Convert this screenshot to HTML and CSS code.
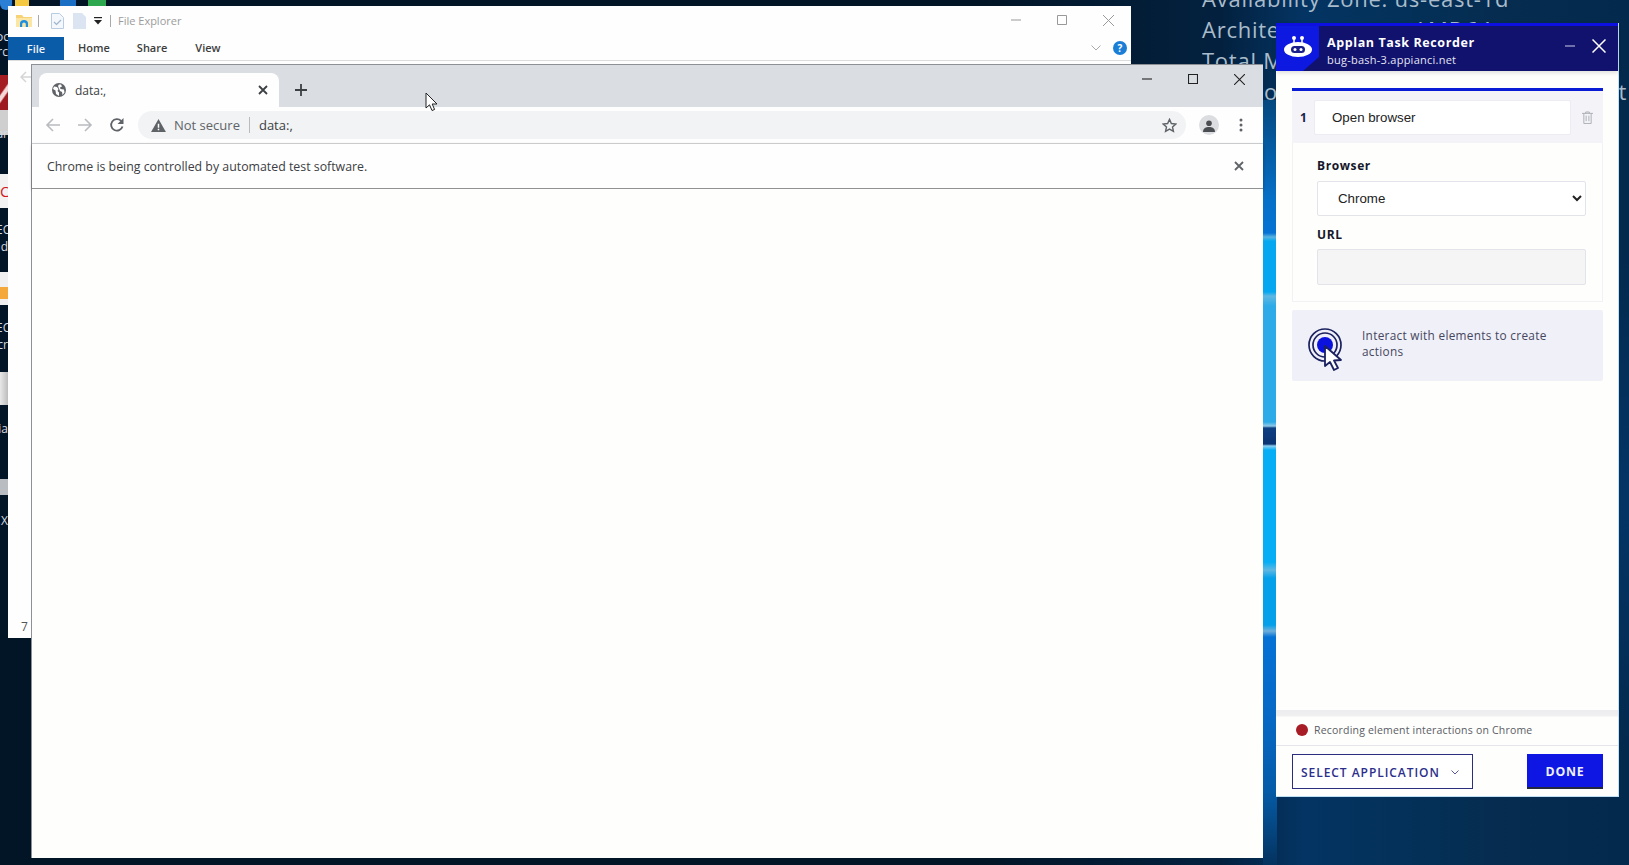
FILE: index.html
```html
<!DOCTYPE html>
<html lang="en">
<head>
<meta charset="utf-8">
<title>Applan Task Recorder</title>
<link rel="stylesheet" href="styles.css">
</head>
<body>
<main class="desktop">
  <div class="wall-streak"></div>

  <div class="bginfo">
    <div class="bg-line bg-line-1">Availability Zone: us-east-1d</div>
    <div class="bg-line bg-line-2"><span>Architecture:</span><span class="bg-value">AMD64</span></div>
    <div class="bg-line bg-line-3">Total Memory:</div>
    <div class="bg-line bg-line-4"><span>o</span><span>t</span></div>
  </div>

  <div class="edge-icons">
    <i class="piece p-chrome"></i><i class="piece p-yellow"></i><i class="piece p-blue"></i><i class="piece p-green"></i>
    <span class="edge-text t1">oc</span><span class="edge-text t2">rc</span>
    <i class="piece p-red"></i><i class="piece p-gray"></i><span class="edge-text t3">ar</span>
    <i class="piece p-white1"></i><span class="edge-c">C</span><span class="edge-text t4">EC</span><span class="edge-text t5">d</span>
    <i class="piece p-white2"></i><i class="piece p-folder"></i><span class="edge-text t6">EC</span><span class="edge-text t7">cr</span>
    <i class="piece p-white3"></i><span class="edge-text t8">ia</span>
    <i class="piece p-gear"></i><span class="edge-text t9">X</span>
  </div>

  <section class="explorer">
    <header class="fe-title">
      <svg class="fe-folder" viewBox="0 0 16 16" width="16" height="16"><path d="M0 2h6l1.500 2H16v10H0z" fill="#f6d377"/><path d="M0 5h16v9H0z" fill="#fbe6a6"/><path d="M4 14V10.500a4 3.500 0 0 1 8 0V14H9.800v-3a1.800 1.500 0 0 0-3.600 0v3z" fill="#1f8fe0"/></svg>
      <span class="fe-sep"></span>
      <svg class="fe-doc" viewBox="0 0 13 16" width="13" height="16"><path d="M.5.500h8l4 4v11H.5z" fill="#f4f7fb" stroke="#b8cde2"/><path d="M3 9l2.500 2.500L10 7" fill="none" stroke="#9db6cd" stroke-width="1.200"/></svg>
      <svg class="fe-doc2" viewBox="0 0 13 16" width="13" height="16"><path d="M0 0h9l4 4v12H0z" fill="#dbe5f2"/></svg>
      <svg class="fe-drop" viewBox="0 0 8 8" width="8" height="8"><path d="M0 0h8v1.200H0z" fill="#222"/><path d="M0 3h8L4 7.500z" fill="#222"/></svg>
      <span class="fe-sep"></span>
      <span class="fe-name">File Explorer</span>
      <div class="win-controls fe-controls">
        <span class="win-btn"><svg viewBox="0 0 10 10" width="10" height="10"><path d="M0 5h10" stroke="#999" fill="none"/></svg></span>
        <span class="win-btn"><svg viewBox="0 0 10 10" width="10" height="10"><path d="M.5.500h9v9h-9z" stroke="#999" fill="none"/></svg></span>
        <span class="win-btn"><svg viewBox="0 0 10 10" width="11" height="11"><path d="M0 0l10 10M10 0L0 10" stroke="#999" fill="none" stroke-width=".9"/></svg></span>
      </div>
    </header>
    <nav class="fe-ribbon">
      <span class="fe-file">File</span>
      <span class="fe-tab fe-home">Home</span>
      <span class="fe-tab fe-share">Share</span>
      <span class="fe-tab fe-view">View</span>
      <svg class="fe-chev" viewBox="0 0 10 6" width="10" height="6"><path d="M.5.500L5 5 9.500.500" stroke="#aaa" fill="none"/></svg>
      <span class="fe-help">?</span>
    </nav>
    <div class="fe-body">
      <svg class="fe-back" viewBox="0 0 14 12" width="14" height="12"><path d="M6 1L1 6l5 5M1 6h13" fill="none" stroke="#d5d5d5" stroke-width="1.500"/></svg>
      <span class="fe-count">7</span>
    </div>
  </section>

  <section class="chrome">
    <div class="tabstrip">
      <div class="tab">
        <svg class="globe" viewBox="0 0 14 14" width="14" height="14"><circle cx="7" cy="7" r="7" fill="#5f6368"/><path d="M2 3.500l3 .5 1.500 2-1 2 1.500 1.500V13L4 11 3.500 7.500 1 6zM9 1.500l1 2-2 1 .5 1.500 3.500.5.500 3-2 2.500-.5-3-2-1L7 5.500 6 3l1-1.500z" fill="#fff"/></svg>
        <span class="tab-title">data:,</span>
        <svg class="tab-x" viewBox="0 0 10 10" width="10" height="10"><path d="M1 1l8 8M9 1L1 9" stroke="#3c4043" stroke-width="1.800" fill="none"/></svg>
      </div>
      <svg class="tab-new" viewBox="0 0 12 12" width="12" height="12"><path d="M6 0v12M0 6h12" stroke="#3c4043" stroke-width="1.800" fill="none"/></svg>
      <div class="win-controls chrome-controls">
        <span class="win-btn"><svg viewBox="0 0 10 10" width="10" height="10"><path d="M0 5h10" stroke="#222" fill="none" stroke-width="1.100"/></svg></span>
        <span class="win-btn"><svg viewBox="0 0 10 10" width="10" height="10"><path d="M.5.500h9v9h-9z" stroke="#222" fill="none" stroke-width="1.100"/></svg></span>
        <span class="win-btn"><svg viewBox="0 0 10 10" width="11" height="11"><path d="M0 0l10 10M10 0L0 10" stroke="#222" fill="none" stroke-width="1"/></svg></span>
      </div>
    </div>
    <div class="toolbar">
      <svg class="nav-icon" viewBox="0 0 16 16" width="16" height="16"><path d="M8 2L2 8l6 6M2 8h13" stroke="#b8bbbf" stroke-width="1.600" fill="none"/></svg>
      <svg class="nav-icon" viewBox="0 0 16 16" width="16" height="16"><path d="M8 2l6 6-6 6M14 8H1" stroke="#b8bbbf" stroke-width="1.600" fill="none"/></svg>
      <svg class="nav-icon" viewBox="0 0 16 16" width="16" height="16"><path d="M13.500 9.500a5.800 5.800 0 1 1-1.400-5.700" stroke="#5f6368" stroke-width="1.800" fill="none"/><path d="M14.500 1v6h-6z" fill="#5f6368"/></svg>
      <div class="omnibox">
        <svg class="warn" viewBox="0 0 16 14" width="15" height="13"><path d="M8 0l8 14H0z" fill="#5f6368"/><path d="M7.200 5h1.600v4.500H7.200zM7.200 10.500h1.600V12H7.200z" fill="#fff"/></svg>
        <span class="not-secure">Not secure</span>
        <span class="omni-sep"></span>
        <span class="omni-url">data:,</span>
        <svg class="star" viewBox="0 0 16 16" width="15" height="15"><path d="M8 1.500l2 4.400 4.800.5-3.600 3.200 1 4.700L8 11.900l-4.200 2.400 1-4.700L1.200 6.400 6 5.900z" fill="none" stroke="#5f6368" stroke-width="1.500"/></svg>
      </div>
      <span class="avatar"><svg viewBox="0 0 12 12" width="12" height="12"><circle cx="6" cy="3.200" r="2.800" fill="#4a4d52"/><path d="M0 12c0-4 3-5 6-5s6 1 6 5z" fill="#4a4d52"/></svg></span>
      <svg class="kebab" viewBox="0 0 4 14" width="4" height="14"><circle cx="2" cy="2" r="1.500" fill="#5f6368"/><circle cx="2" cy="7" r="1.500" fill="#5f6368"/><circle cx="2" cy="12" r="1.500" fill="#5f6368"/></svg>
    </div>
    <div class="infobar">
      <span class="info-text">Chrome is being controlled by automated test software.</span>
      <svg class="info-x" viewBox="0 0 10 10" width="10" height="10"><path d="M1 1l8 8M9 1L1 9" stroke="#5f6368" stroke-width="1.800" fill="none"/></svg>
    </div>
    <div class="page"></div>
  </section>

  <svg class="cursor" viewBox="0 0 14 20" width="14" height="20"><path d="M1 1v15l3.500-3.200L7 18.500l2.600-1-2.400-5.500H12z" fill="#fff" stroke="#222" stroke-width="1"/></svg>

  <aside class="recorder">
    <header class="rec-head">
      <div class="rec-logo">
        <svg viewBox="0 0 28 21" width="28" height="21"><circle cx="10" cy="2" r="2" fill="#fff"/><circle cx="18" cy="2" r="2" fill="#fff"/><path d="M10 2v6M18 2v6" stroke="#fff" stroke-width="1.500"/><ellipse cx="14" cy="13.500" rx="14" ry="7.500" fill="#fff"/><rect x="7" y="10" width="14" height="7" rx="3.500" fill="#1b1f8a"/><circle cx="11" cy="13.500" r="1.500" fill="#fff"/><circle cx="17" cy="13.500" r="1.500" fill="#fff"/></svg>
      </div>
      <div class="rec-titles">
        <div class="rec-title">Applan Task Recorder</div>
        <div class="rec-sub">bug-bash-3.appianci.net</div>
      </div>
      <svg class="rec-min" viewBox="0 0 10 2" width="10" height="2"><path d="M0 1h10" stroke="#8f8fc0" stroke-width="1.500"/></svg>
      <svg class="rec-close" viewBox="0 0 14 14" width="14" height="14"><path d="M.5.500l13 13M13.500.500l-13 13" stroke="#fff" stroke-width="1.500" fill="none"/></svg>
    </header>
    <div class="rec-body">
      <div class="step">
        <div class="step-head">
          <span class="step-num">1</span>
          <input class="step-name" type="text" value="Open browser" aria-label="Step name">
          <svg class="trash" viewBox="0 0 12 14" width="11" height="13"><path d="M0 2.500h12M4 2.500V1h4v1.500M2 2.500V13.500h8V2.500M4.500 5v6M7.500 5v6" fill="none" stroke="#a9abb3" stroke-width="1"/></svg>
        </div>
        <div class="step-form">
          <label class="field-label" for="browser">Browser</label>
          <select class="field-select" id="browser"><option>Chrome</option></select>
          <label class="field-label field-label-url" for="url">URL</label>
          <input class="field-input" id="url" type="text">
        </div>
      </div>
      <div class="hint">
        <svg class="hint-icon" viewBox="0 0 36 46" width="36" height="46">
          <circle cx="17" cy="20" r="16" fill="none" stroke="#1c2260" stroke-width="1.700"/>
          <circle cx="17" cy="20" r="12" fill="none" stroke="#1c2260" stroke-width="1.700"/>
          <circle cx="17" cy="20" r="8" fill="#0b12dd"/>
          <path d="M17 21v20l5-4 4 8 4-2-4-7.500 7-.5z" fill="#fff" stroke="#1c2260" stroke-width="1.800" stroke-linejoin="round"/>
        </svg>
        <p class="hint-text">Interact with elements to create actions</p>
      </div>
    </div>
    <footer class="rec-foot">
      <div class="rec-status"><span class="rec-dot"></span><span>Recording element interactions on Chrome</span></div>
      <div class="rec-actions">
        <button class="btn-select" type="button">SELECT APPLICATION<svg viewBox="0 0 8 5" width="8" height="5"><path d="M.5.500L4 4 7.500.500" stroke="#55579a" fill="none"/></svg></button>
        <button class="btn-done" type="button">DONE</button>
      </div>
    </footer>
  </aside>
</main>
</body>
</html>
```

FILE: styles.css
```css
* { box-sizing: border-box; }
html, body { margin: 0; padding: 0; height: 100%; background: #021526; }
body { overflow: hidden; font-family: "Open Sans", "Noto Sans", sans-serif; }

.desktop {
  position: relative;
  width: 1629px;
  height: 865px;
  overflow: hidden;
  background:
    radial-gradient(ellipse 200px 260px at 1640px 500px, #033566 0%, transparent 100%),
    linear-gradient(90deg, #021526 0%, #021526 60%, #03213f 75%, #043463 80%, #033159 86%, #062c50 92%, #03294c 100%);
}

/* wallpaper light streak between the browser and the recorder */
.wall-streak {
  position: absolute;
  left: 1263px;
  top: 100px;
  width: 14px;
  height: 765px;
  background: linear-gradient(180deg,
    #04487f 0, #0570c8 100px, #0572d4 133px, #5ab4e0 137px, #05a8f0 141px, #05a8f0 192px, #5fb8e2 196px,
    #2cabe8 206px, #2cabe8 322px, #8fc9e8 326px, #0d3f82 328px, #0b3473 344px, #8fd0f0 346px,
    #05aef5 350px, #05aef5 462px, #5fb8e2 470px, #05a0ea 478px, #05a0ea 525px, #6fb0da 531px,
    #0572d6 537px, #0668c4 620px, #055ca8 690px, #04325e 765px);
}

.bginfo {
  position: absolute;
  left: 1202px;
  top: -18px;
  color: #a9bccb;
  font-family: "Open Sans", sans-serif;
  font-size: 22px;
  letter-spacing: .75px;
  line-height: 32px;
  white-space: nowrap;
}
.bg-line { height: 31px; }
.bg-value { display: inline-block; height: 12px; margin-left: 70px; overflow: hidden; vertical-align: top; }
.bg-line-3 { width: 74px; overflow: hidden; }
.bg-line-4 { display: flex; justify-content: space-between; width: 425px; padding-left: 62px; }

/* fragments of desktop icons that peek out on the left edge */
.edge-icons { position: absolute; left: 0; top: 0; width: 8px; height: 640px; }
.piece { position: absolute; display: block; left: 0; width: 8px; }
.p-chrome { top: 0; height: 10px; width: 12px; background: #2b7fd4; border-radius: 0 0 8px 8px; }
.p-yellow { top: 0; left: 15px; width: 14px; height: 6px; background: #f5c842; }
.p-blue { top: 0; left: 60px; width: 16px; height: 6px; background: #1a6fc4; }
.p-green { top: 0; left: 88px; width: 18px; height: 6px; background: #2ea84f; }
.p-red { top: 75px; height: 36px; background: linear-gradient(125deg, #a31d22 0, #a31d22 40%, #f4d8d8 46%, #f4d8d8 56%, #9c1a20 62%); }
.p-gray { top: 110px; height: 25px; background: #cfcfcf; }
.p-white1 { top: 174px; height: 34px; background: #f2f2f2; }
.p-white2 { top: 272px; height: 33px; background: #f0f0f0; }
.p-folder { top: 287px; height: 12px; background: #f4a83a; }
.p-white3 { top: 372px; height: 33px; background: linear-gradient(90deg, #e8e8e8, #bcbcbc); }
.p-gear { top: 479px; height: 16px; background: #b9bcc0; }
.edge-text { position: absolute; left: -4px; width: 12px; overflow: hidden; color: #d5dbe1; font-size: 12px; line-height: 14px; text-align: right; white-space: nowrap; }
.edge-c { position: absolute; left: 0; top: 182px; width: 8px; overflow: hidden; color: #d3181e; font-size: 15px; line-height: 18px; }
.t1 { top: 30px; } .t2 { top: 45px; } .t3 { top: 127px; }
.t4 { top: 223px; } .t5 { top: 240px; } .t6 { top: 321px; } .t7 { top: 338px; }
.t8 { top: 422px; } .t9 { top: 514px; }

/* shared window controls */
.win-controls { display: flex; margin-left: auto; }
.win-btn { display: flex; width: 46px; justify-content: center; align-items: center; }

/* File Explorer */
.explorer {
  position: absolute;
  left: 8px;
  top: 6px;
  width: 1123px;
  height: 632px;
  display: flex;
  flex-direction: column;
  background: #fefefe;
}
.fe-title { display: flex; align-items: center; height: 30px; padding-left: 8px; }
.fe-folder { margin-right: 6px; }
.fe-sep { width: 1px; height: 12px; background: #a9a9a9; }
.fe-doc { margin-left: 12px; }
.fe-doc2 { margin-left: 9px; }
.fe-drop { margin: 0 8px 0 8px; }
.fe-name { margin: 0 0 1px 7px; color: #9c9c9c; font-size: 11px; }
.fe-controls { height: 28px; margin-bottom: 2px; }
.fe-ribbon {
  position: relative;
  display: flex;
  align-items: center;
  height: 25px;
  border-bottom: 1px solid #dcdcdc;
  font-size: 11px;
  color: #444;
}
.fe-file { display: flex; height: 23px; width: 56px; align-items: center; justify-content: center; background: #0a5ba8; color: #f1f5fa; font-weight: 600; }
.fe-tab { margin-bottom: 2px; color: #3d3d3d; font-weight: 600; }
.fe-home { margin-left: 14px; }
.fe-share { margin-left: 27px; }
.fe-view { margin-left: 28px; }
.fe-chev { margin-left: auto; margin-right: 12px; }
.fe-help { display: flex; width: 14px; height: 14px; margin-right: 4px; align-items: center; justify-content: center; border-radius: 50%; background: #1b7ed6; color: #fff; font-size: 10px; font-weight: 700; }
.fe-body { position: relative; flex: 1; }
.fe-back { margin: 10px 0 0 12px; display: block; }
.fe-count { position: absolute; left: 13px; bottom: 3px; color: #555; font-size: 12px; }

/* Chrome */
.chrome {
  position: absolute;
  left: 31px;
  top: 65px;
  width: 1232px;
  height: 793px;
  display: flex;
  flex-direction: column;
  background: #fefefc;
  border-left: 1px solid #8d9094;
  box-shadow: 0 -1px 0 #8d9094;
}
.tabstrip { display: flex; align-items: flex-end; height: 42px; padding: 0 1px 0 7px; background: #dadde2; }
.tab { display: flex; align-items: center; width: 240px; height: 34px; padding: 0 11px 0 13px; background: #fefefe; border-radius: 8px 8px 0 0; }
.tab-title { margin-left: 9px; color: #3c4043; font-size: 12px; }
.tab-x { margin-left: auto; }
.tab-new { margin: 0 0 11px 16px; }
.chrome-controls { align-self: flex-start; height: 28px; }
.toolbar { display: flex; align-items: center; height: 37px; padding-left: 13px; background: #fefefe; border-bottom: 1px solid #d4d6d9; }
.nav-icon { margin-right: 16px; flex: none; }
.omnibox { display: flex; flex: none; align-items: center; width: 1048px; height: 28px; margin-left: -3px; padding: 0 9px 0 13px; border-radius: 14px; background: #f1f3f4; font-size: 13px; }
.not-secure { margin-left: 8px; color: #5f6368; }
.omni-sep { width: 1px; height: 16px; margin: 0 9px 0 9px; background: #b8bbbf; }
.omni-url { color: #3c4043; }
.star { margin-left: auto; }
.avatar { display: flex; width: 20px; height: 20px; margin-left: 13px; align-items: flex-end; justify-content: center; padding-bottom: 3px; border-radius: 50%; background: #dcdde0; }
.kebab { margin-left: 20px; }
.infobar { display: flex; align-items: center; height: 45px; padding: 0 19px 0 15px; background: #fefefe; border-bottom: 1px solid #8f9194; box-shadow: 0 1px 3px rgba(0,0,0,.3); }
.info-text { color: #3c4043; font-size: 12.350px; }
.info-x { margin-left: auto; }
.page { flex: 1; background: #fefefc; }

.cursor { position: absolute; left: 425px; top: 92px; }

/* Recorder */
.recorder {
  position: absolute;
  left: 1276px;
  top: 23px;
  width: 343px;
  height: 774px;
  display: flex;
  flex-direction: column;
  background: #fefefc;
  border-right: 1px solid #bfe0f5;
  border-bottom: 1px solid #bfe0f5;
}
.rec-head { display: flex; align-items: center; height: 48px; flex: none; padding-right: 12px; background: #11116e; border-top: 3px solid #0c10e0; box-shadow: 0 2px 4px rgba(0,0,0,.12); }
.rec-logo { display: flex; align-items: center; justify-content: center; width: 43px; height: 45px; padding-bottom: 5px; background: #0d18e0; clip-path: polygon(0 0, 100% 0, 100% 31px, 27px 100%, 0 100%); }
.rec-titles { margin: 5px 0 0 8px; }
.rec-title { color: #fff; font-size: 12.500px; font-weight: 700; letter-spacing: .6px; line-height: 18px; }
.rec-sub { margin-top: 0; color: #e4e6f2; font-size: 11px; line-height: 16px; letter-spacing: .25px; }
.rec-min { margin: 0 0 6px auto; }
.rec-close { margin: 0 0 6px 17px; }
.rec-body { flex: 1; padding: 17px 15px 0 16px; }
.step { border-top: 3px solid #0a1bd6; }
.step-head { display: flex; align-items: center; height: 52px; padding-left: 8px; background: #f3f3f8; }
.step-num { width: 14px; color: #1a1f4a; font-size: 12px; font-weight: 700; }
.step-name { width: 257px; height: 35px; padding: 0 17px; border: 1px solid #ececf2; border-radius: 2px; background: #fff; color: #222; font-family: "Liberation Sans", sans-serif; font-size: 13.300px; outline: 0; }
.trash { margin-left: 11px; }
.step-form { display: flex; flex-direction: column; height: 159px; padding: 15px 17px 0 24px; border: 1px solid #f1f1f6; border-top: 0; }
.field-label { color: #15172a; font-size: 12px; font-weight: 700; letter-spacing: .6px; line-height: 16px; }
.field-label-url { margin-top: 11px; }
.field-select { width: 269px; height: 35px; margin-top: 7px; padding-left: 16px; border: 1px solid #e3e3ea; border-radius: 2px; background: #fff; color: #222; font-family: "Liberation Sans", sans-serif; font-size: 13.300px; }
.field-input { width: 269px; height: 36px; margin-top: 6px; border: 1px solid #e3e3ea; border-radius: 2px; background: #f5f5f6; }
.hint { display: flex; align-items: center; height: 71px; margin-top: 8px; padding: 0 0 5px 16px; border-radius: 2px; background: #f0f0f8; }
.hint-icon { flex: none; margin-top: 9px; }
.hint-text { width: 225px; margin: 0 0 0 18px; color: #45475e; font-size: 11.800px; line-height: 16.500px; letter-spacing: .3px; }
.rec-foot { flex: none; }
.rec-status { display: flex; align-items: center; height: 36px; padding-left: 20px; background: linear-gradient(180deg, #ececee 0, #f0f0f1 6px, #fefefc 7px); border-bottom: 1px solid #e6e6ea; color: #5a5c66; font-size: 10.500px; letter-spacing: .2px; padding-top: 5px; }
.rec-dot { width: 12px; height: 12px; margin-right: 6px; border-radius: 50%; background: #a81c26; }
.rec-actions { display: flex; justify-content: space-between; align-items: flex-end; height: 50px; padding: 0 15px 7px 16px; }
.btn-select { display: flex; align-items: center; gap: 11px; width: 181px; height: 35px; padding: 1px 0 0 8px; border: 1px solid #2b2d7e; background: #fff; color: #2c2e8c; font-family: "Open Sans", sans-serif; font-size: 12px; font-weight: 600; letter-spacing: .95px; }
.btn-done { width: 76px; height: 35px; padding: 1px 0 0; border: 0; border-bottom: 2px solid #23263f; background: #0d16e2; color: #f0f1fb; font-family: "Open Sans", sans-serif; font-size: 12.300px; font-weight: 700; letter-spacing: .8px; }
```
